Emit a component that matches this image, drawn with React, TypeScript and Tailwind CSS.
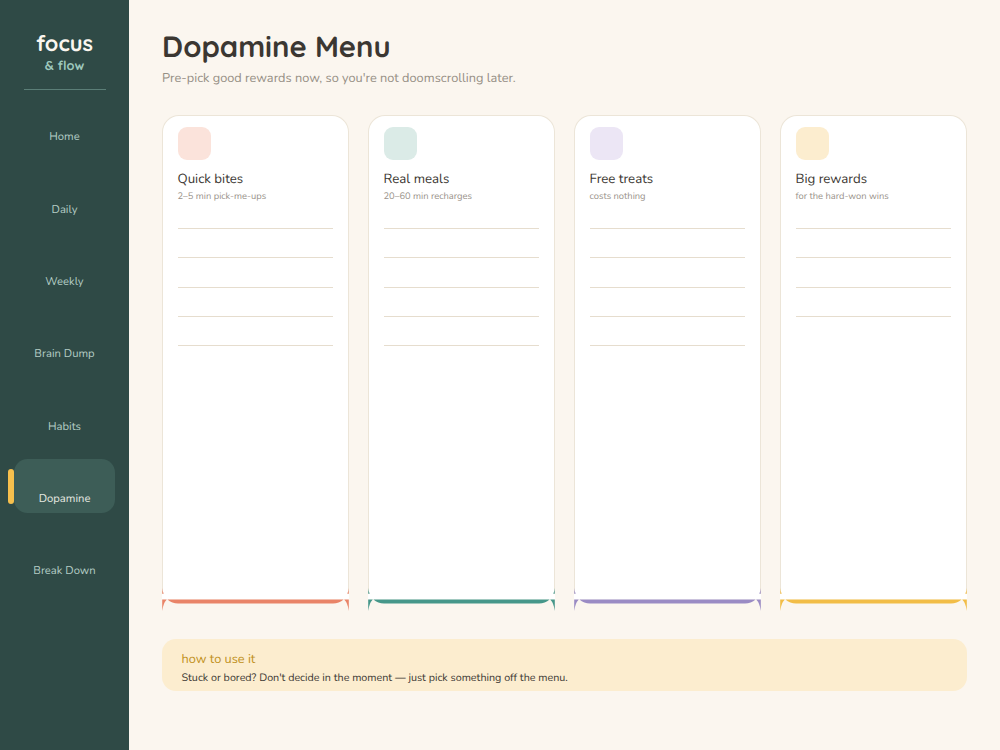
const navItems = ['Home', 'Daily', 'Weekly', 'Brain Dump', 'Habits', 'Dopamine', 'Break Down']

const menu = [
  { title: 'Quick bites', note: '2–5 min pick-me-ups', lines: 5, swatch: 'bg-[#fbe3db]', accent: 'text-[#e98468]' },
  { title: 'Real meals', note: '20–60 min recharges', lines: 5, swatch: 'bg-[#dbebe7]', accent: 'text-[#46978a]' },
  { title: 'Free treats', note: 'costs nothing', lines: 5, swatch: 'bg-[#ece6f5]', accent: 'text-[#9a8bc4]' },
  { title: 'Big rewards', note: 'for the hard-won wins', lines: 4, swatch: 'bg-[#fcedcf]', accent: 'text-[#f2bd47]' },
]

function Sidebar() {
  return (
    <aside className="flex w-[129px] shrink-0 flex-col items-center bg-[#2f4a46]">
      <div className="mt-[30px] h-7 font-['Quicksand','Lato',sans-serif] text-[21.75px] leading-7 font-bold text-[#fbf6ef]">focus</div>
      <div className="h-[17px] font-['Quicksand','Lato',sans-serif] text-[12.75px] leading-[17px] font-bold text-[#9dc8bc]">&amp; flow</div>
      <div className="mt-[14px] h-px w-[82px] bg-[#5b7e77]" />
      <nav className="mt-[8px] flex w-full flex-col items-center gap-[18.3px]">
        {navItems.map((item) => (
          <div key={item} className="relative flex h-[54px] w-full justify-center">
            {item === 'Dopamine' && <div className="absolute top-[9.5px] left-[8px] h-[35px] w-[6px] rounded-full bg-[#f6c04d]" />}
            <div className={`flex h-[54px] w-[101.5px] items-end justify-center rounded-[13.5px] pb-[6.6px] ${item === 'Dopamine' ? 'bg-[#3d5d57] text-[#e6e9e1]' : 'text-[#b4cdc5]'}`}>
              <span className="text-[11.25px] leading-4 whitespace-nowrap">{item}</span>
            </div>
          </div>
        ))}
      </nav>
    </aside>
  )
}

// coloured strip along the bottom of a card, with the clipped rounded corners
function CardFoot({ accent }: { accent: string }) {
  return (
    <svg className={`-mt-[7px] block h-[25px] w-[187px] ${accent}`} viewBox="0 0 187 25" fill="currentColor">
      <rect y="7" width="187" height="5.5" fill="#fff" />
      <path d="M0.3 1 Q0.5 4 1.7 6.8 H0.3Z M186.7 1 Q186.5 4 185.3 6.8 H186.7Z" />
      <path d="M0.2 12.4 H4.8 Q1.2 16 0.2 24Z M186.8 12.4 H182.2 Q185.8 16 186.8 24Z" />
      <path d="M5.4 12.4 H181.6 Q177 16.5 171 16.5 H16 Q10 16.5 5.4 12.4Z" />
    </svg>
  )
}

function MenuCard({ item }: { item: (typeof menu)[number] }) {
  return (
    <section className="w-[187px]">
      <div className="h-[479px] rounded-t-[17px] border border-b-0 border-[#ece5d8] bg-white pt-[11px] pr-[15.5px] pl-[14.5px]">
        <div className={`h-[33px] w-[33.5px] rounded-[9px] ${item.swatch}`} />
        <h2 className="mt-[9.4px] text-[13.25px] leading-5 whitespace-nowrap text-[#3b3732]">{item.title}</h2>
        <p className="mt-[1.6px] text-[9.35px] leading-3 whitespace-nowrap text-[#99928a]">{item.note}</p>
        <div className="mt-[25px] flex flex-col gap-[28.3px]">
          {Array.from({ length: item.lines }).map((_, i) => (
            <div key={i} className="h-px bg-[#e6ddce]" />
          ))}
        </div>
      </div>
      <CardFoot accent={item.accent} />
    </section>
  )
}

export default function App() {
  return (
    <div className="flex h-[750px] w-[1000px] overflow-hidden bg-[#fbf6ef] font-['Nunito','Lato',sans-serif] [text-rendering:geometricPrecision]">
      <Sidebar />
      <main className="flex-1 pt-[26.5px] pl-[33px]">
        <h1 className="h-10 font-['Quicksand','Lato',sans-serif] text-[29.25px] leading-10 font-bold whitespace-nowrap text-[#3b3732]">Dopamine Menu</h1>
        <p className="mt-[1.5px] h-5 text-[12.75px] leading-5 whitespace-nowrap text-[#968f85]">Pre-pick good rewards now, so you're not doomscrolling later.</p>
        <div className="mt-[27px] flex gap-[19px]">
          {menu.map((item) => (
            <MenuCard key={item.title} item={item} />
          ))}
        </div>
        <div className="mt-[27px] h-[52px] w-[805px] rounded-[14px] bg-[#fcedcf] pt-[10px] pl-[19.5px]">
          <h3 className="text-[12.75px] leading-5 text-[#c0901b]">how to use it</h3>
          <p className="mt-[0.5px] text-[10.75px] leading-4 whitespace-nowrap text-[#3b3732]">Stuck or bored? Don't decide in the moment — just pick something off the menu.</p>
        </div>
      </main>
    </div>
  )
}
